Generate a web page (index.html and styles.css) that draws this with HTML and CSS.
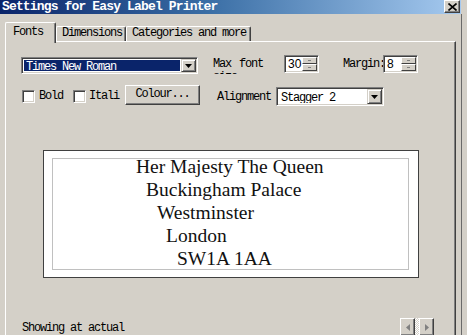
FILE: index.html
```html
<!DOCTYPE html>
<html>
<head>
<meta charset="utf-8">
<link rel="stylesheet" href="styles.css">
</head>
<body>
<div class="win">
  <div class="titlebar">
    <span class="title">Settings for Easy Label Printer</span>
    <span class="close"><svg width="9" height="8" viewBox="0 0 9 8"><path d="M0.5 0.5 L8.5 7.5 M8.5 0.5 L0.5 7.5" stroke="#000" stroke-width="1.6"/></svg></span>
  </div>
  <div class="frame">
    <div class="tabs">
      <div class="tab active">Fonts</div>
      <div class="tab t-dim">Dimensions</div>
      <div class="tab t-cat">Categories and more</div>
    </div>
    <div class="panel">
      <div class="row1">
        <div class="combo font-combo">
          <span class="combo-text selected">Times New Roman</span>
          <span class="arrow"><svg width="7" height="4" viewBox="0 0 7 4"><path d="M0 0 H7 L3.5 4 Z" fill="#000"/></svg></span>
        </div>
        <div class="lbl maxfont">Max font size</div>
        <div class="spin s30"><span class="spin-val">30</span><span class="spin-btns"><span class="sb"><i></i></span><span class="sb"><i></i></span></span></div>
        <div class="lbl margin">Margin:</div>
        <div class="spin s8"><span class="spin-val">8</span><span class="spin-btns"><span class="sb"><i></i></span><span class="sb"><i></i></span></span></div>
      </div>
      <div class="row2">
        <span class="check"></span>
        <span class="lbl cb-bold">Bold</span>
        <span class="check c2"></span>
        <span class="lbl cb-ital">Itali</span>
        <div class="button colour">Colour...</div>
        <div class="lbl align">Alignment</div>
        <div class="combo align-combo">
          <span class="combo-text">Stagger 2</span>
          <span class="arrow"><svg width="7" height="4" viewBox="0 0 7 4"><path d="M0 0 H7 L3.5 4 Z" fill="#000"/></svg></span>
        </div>
      </div>
      <div class="preview">
        <div class="inner">
          <div class="lines">
            <div class="l1">Her Majesty The Queen</div>
            <div class="l2">Buckingham Palace</div>
            <div class="l3">Westminster</div>
            <div class="l4">London</div>
            <div class="l5">SW1A 1AA</div>
          </div>
        </div>
      </div>
      <div class="status">
        <span class="lbl showing">Showing at actual</span>
        <div class="scroll">
          <span class="sbtn"><svg width="4" height="7" viewBox="0 0 4 7"><path d="M4 0 V7 L0 3.5 Z" fill="#808080"/></svg></span>
          <span class="dots"></span>
          <span class="sbtn"><svg width="4" height="7" viewBox="0 0 4 7"><path d="M0 0 V7 L4 3.5 Z" fill="#808080"/></svg></span>
        </div>
      </div>
    </div>
  </div>
</div>
</body>
</html>
```

FILE: styles.css
```css
* { box-sizing: border-box; }
html, body {
  margin: 0;
  padding: 0;
  width: 467px;
  height: 335px;
  overflow: hidden;
  background: #d4d0c8;
}
.win {
  width: 467px;
  height: 335px;
  display: flex;
  flex-direction: column;
  font-family: "Liberation Mono", monospace;
  font-size: 12px;
  letter-spacing: -1.2px;
  color: #000;
}
.titlebar {
  width: 461px;
  height: 14px;
  flex: none;
  display: flex;
  align-items: center;
  background: linear-gradient(to right, #0a246a 0%, #3a6ea5 45%, #a6caf0 100%);
}
.title {
  color: #fff;
  font-weight: bold;
  font-size: 13px;
  letter-spacing: -0.85px;
  line-height: 14px;
  padding-left: 2px;
  white-space: nowrap;
}
.close {
  margin-left: auto;
  margin-right: 1px;
  width: 16px;
  height: 13px;
  margin-top: -1px;
  background: #d4d0c8;
  border-top: 1px solid #fff;
  border-left: 1px solid #fff;
  border-right: 1px solid #404040;
  border-bottom: 1px solid #404040;
  box-shadow: inset -1px -1px #808080;
  display: flex;
  align-items: center;
  justify-content: center;
}
.frame {
  flex: 1;
  width: 462px;
  border-right: 1px solid #6a6a6a;
  display: flex;
  flex-direction: column;
}
.tabs {
  margin-top: 8px;
  margin-left: 5px;
  height: 19px;
  display: flex;
  align-items: flex-end;
  position: relative;
  z-index: 1;
}
.tab {
  height: 15px;
  line-height: 13px;
  padding-left: 5px;
  border-top: 1px solid #fff;
  border-left: 1px solid #fff;
  border-right: 1px solid #404040;
  box-shadow: inset -1px 0 #808080;
  border-radius: 2px 2px 0 0;
  white-space: nowrap;
  background: #d4d0c8;
}
.tab.active {
  width: 51px;
  height: 21px;
  margin-bottom: -2px;
  padding-left: 7px;
  padding-top: 3px;
  line-height: 13px;
}
.t-dim { width: 70px; }
.t-cat { width: 125px; }
.panel {
  flex: 1;
  margin-left: 5px;
  width: 451px;
  border-top: 1px solid #fff;
  border-left: 1px solid #fff;
  border-right: 1px solid #404040;
  box-shadow: inset -1px 0 #808080;
  display: flex;
  flex-direction: column;
}
.lbl {
  line-height: 14px;
  white-space: nowrap;
}
.combo, .spin {
  background: #fff;
  border-top: 1px solid #808080;
  border-left: 1px solid #808080;
  border-bottom: 1px solid #fff;
  border-right: 1px solid #fff;
  box-shadow: inset 1px 1px #404040, inset -1px -1px #d4d0c8;
  display: flex;
  align-items: stretch;
  padding: 2px;
}
.row1 {
  margin-top: 13px;
  height: 18px;
  display: flex;
  align-items: flex-start;
}
.font-combo {
  margin-left: 15px;
  margin-top: 2px;
  width: 177px;
  height: 17px;
}
.combo-text {
  flex: 1;
  line-height: 13px;
  padding-left: 2px;
  padding-top: 1px;
  white-space: nowrap;
  overflow: hidden;
}
.combo-text.selected {
  background: #0a246a;
  color: #fff;
  margin-right: 1px;
}
.arrow {
  width: 15px;
  flex: none;
  background: #d4d0c8;
  border-top: 1px solid #d4d0c8;
  border-left: 1px solid #d4d0c8;
  border-right: 1px solid #404040;
  border-bottom: 1px solid #404040;
  box-shadow: inset 1px 1px #fff, inset -1px -1px #808080;
  display: flex;
  align-items: center;
  justify-content: center;
  margin: -1px -1px -1px 0;
}
.maxfont {
  margin-left: 15px;
  width: 71px;
  height: 16px;
  line-height: 13px;
  margin-top: 3px;
  white-space: normal;
  overflow: hidden;
  word-spacing: 2px;
}
.spin {
  height: 18px;
  padding: 2px 1px 2px 2px;
}
.s30 { width: 35px; }
.s8 { width: 35px; position: relative; z-index: 1; }
.spin-val {
  flex: 1;
  font-family: "Liberation Sans", sans-serif;
  letter-spacing: 0;
  font-size: 12px;
  line-height: 13px;
  padding-left: 1px;
}
.spin-btns {
  width: 15px;
  display: flex;
  flex-direction: column;
  margin: -1px 0 -1px 0;
}
.sb {
  flex: 1;
  background: #d4d0c8;
  border-top: 1px solid #fff;
  border-left: 1px solid #fff;
  border-right: 1px solid #404040;
  border-bottom: 1px solid #404040;
  display: flex;
  align-items: center;
  justify-content: center;
}
.sb i {
  display: block;
  width: 3px;
  height: 1px;
  background: #808080;
}
.margin {
  margin-left: 24px;
  width: 40px;
  margin-top: 2px;
}
.row2 {
  margin-top: 11px;
  height: 22px;
  display: flex;
  align-items: flex-start;
}
.check {
  width: 13px;
  height: 13px;
  margin-top: 6px;
  margin-left: 16px;
  background: #fff;
  border-top: 1px solid #808080;
  border-left: 1px solid #808080;
  border-bottom: 1px solid #fff;
  border-right: 1px solid #fff;
  box-shadow: inset 1px 1px #404040, inset -1px -1px #d4d0c8;
  flex: none;
}
.check.c2 { margin-left: 10px; }
.cb-bold {
  margin-left: 4px;
  width: 24px;
  margin-top: 5px;
}
.cb-ital {
  margin-left: 3px;
  width: 31px;
  margin-top: 5px;
}
.button {
  margin-left: 5px;
  margin-top: 1px;
  width: 75px;
  height: 20px;
  background: #d4d0c8;
  border-top: 1px solid #fff;
  border-left: 1px solid #fff;
  border-right: 1px solid #404040;
  border-bottom: 1px solid #404040;
  box-shadow: inset -1px -1px #808080;
  display: flex;
  align-items: center;
  justify-content: center;
  line-height: 14px;
  padding-bottom: 2px;
}
.align {
  margin-left: 17px;
  width: 53px;
  margin-top: 6px;
}
.align-combo {
  margin-left: 6px;
  margin-top: 3px;
  width: 108px;
  height: 19px;
  position: relative;
  z-index: 1;
}
.align-combo .combo-text { padding-top: 2px; }
.preview {
  margin-top: 44px;
  margin-left: 37px;
  width: 376px;
  height: 128px;
  background: #fff;
  border: 1px solid #404040;
  padding: 7px 9px 7px 8px;
  flex: none;
}
.inner {
  height: 112px;
  border: 1px solid #c0c0c0;
}
.lines {
  margin-top: -4px;
  font-family: "Liberation Serif", "Times New Roman", serif;
  font-size: 19.5px;
  line-height: 23px;
  letter-spacing: 0;
  color: #111;
  white-space: nowrap;
}
.l1 { margin-left: 83px; }
.l2 { margin-left: 93px; }
.l3 { margin-left: 104px; }
.l4 { margin-left: 113px; }
.l5 { margin-left: 124px; }
.status {
  margin-top: 38px;
  height: 19px;
  display: flex;
  align-items: flex-start;
}
.showing {
  margin-left: 16px;
  margin-top: 5px;
}
.scroll {
  margin-left: auto;
  margin-right: 21px;
  margin-top: 2px;
  display: flex;
}
.sbtn {
  width: 15px;
  height: 18px;
  background: #d4d0c8;
  border-top: 1px solid #fff;
  border-left: 1px solid #fff;
  border-right: 1px solid #404040;
  border-bottom: 1px solid #404040;
  box-shadow: inset -1px -1px #808080;
  display: flex;
  align-items: center;
  justify-content: center;
}
.dots {
  width: 4px;
  height: 18px;
  background: repeating-conic-gradient(#ffffff 0 25%, #d4d0c8 0 50%) 0 0 / 2px 2px;
}
```
